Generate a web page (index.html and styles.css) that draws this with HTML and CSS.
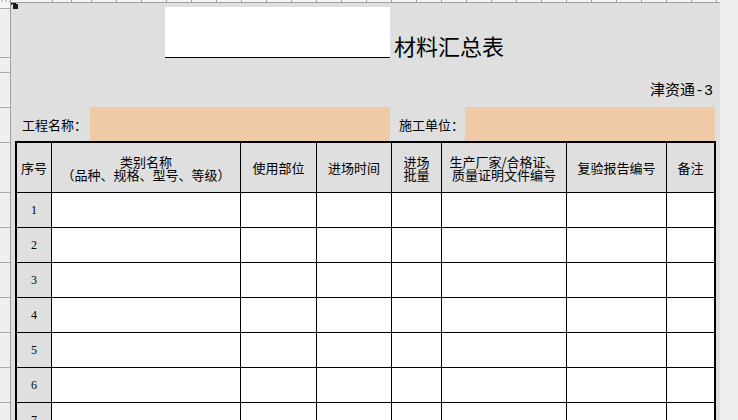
FILE: index.html
```html
<!DOCTYPE html>
<html lang="zh">
<head>
<meta charset="utf-8">
<title>材料汇总表</title>
<link rel="stylesheet" href="styles.css">
</head>
<body>
<div class="app">
  <div class="gutter">
    <div class="gr gr-0"></div>
    <div class="gr gr-49"></div>
    <div class="gr gr-15"></div>
    <div class="gr gr-35"></div>
    <div class="gr gr-35"></div>
    <div class="gr gr-50"></div>
    <div class="gr gr-35"></div>
    <div class="gr gr-35"></div>
    <div class="gr gr-35"></div>
    <div class="gr gr-35"></div>
    <div class="gr gr-35"></div>
    <div class="gr gr-35"></div>
    <div class="gr gr-35"></div>
  </div>
  <div class="main">
    <div class="ticks">
      <div class="tk tk-a"></div><div class="tk tk-b"></div><div class="tk tk-c"></div>
      <div class="tk"></div><div class="tk"></div><div class="tk"></div><div class="tk"></div><div class="tk"></div>
      <div class="tk"></div><div class="tk"></div><div class="tk"></div><div class="tk"></div><div class="tk"></div>
      <div class="tk"></div><div class="tk"></div><div class="tk"></div><div class="tk"></div><div class="tk"></div>
      <div class="tk"></div><div class="tk"></div><div class="tk"></div><div class="tk"></div><div class="tk"></div>
      <div class="tk"></div><div class="tk"></div><div class="tk"></div><div class="tk"></div><div class="tk"></div>
    </div>
    <div class="sheet">
      <div class="marker"><span class="mk-top"></span><span class="mk-left"></span><span class="mk-sq"></span></div>
      <div class="title-row">
        <div class="title-blank"></div>
        <div class="title">材料汇总表</div>
      </div>
      <div class="spacer"></div>
      <div class="code-row"><span class="code">津资通<span class="half">-3</span></span></div>
      <div class="info-row">
        <div class="label label-1">工程名称：</div>
        <div class="fill fill-1"></div>
        <div class="label label-2">施工单位：</div>
        <div class="fill fill-2"></div>
      </div>
      <div class="grid">
        <div class="h">序号</div>
        <div class="h h2">类别名称<br>（品种、规格、型号、等级）</div>
        <div class="h">使用部位</div>
        <div class="h">进场时间</div>
        <div class="h h2">进场<br>批量</div>
        <div class="h h2">生产厂家/合格证、<br>质量证明文件编号</div>
        <div class="h">复验报告编号</div>
        <div class="h">备注</div>

        <div class="n">1</div><div class="c"></div><div class="c"></div><div class="c"></div><div class="c"></div><div class="c"></div><div class="c"></div><div class="c"></div>
        <div class="n">2</div><div class="c"></div><div class="c"></div><div class="c"></div><div class="c"></div><div class="c"></div><div class="c"></div><div class="c"></div>
        <div class="n">3</div><div class="c"></div><div class="c"></div><div class="c"></div><div class="c"></div><div class="c"></div><div class="c"></div><div class="c"></div>
        <div class="n">4</div><div class="c"></div><div class="c"></div><div class="c"></div><div class="c"></div><div class="c"></div><div class="c"></div><div class="c"></div>
        <div class="n">5</div><div class="c"></div><div class="c"></div><div class="c"></div><div class="c"></div><div class="c"></div><div class="c"></div><div class="c"></div>
        <div class="n">6</div><div class="c"></div><div class="c"></div><div class="c"></div><div class="c"></div><div class="c"></div><div class="c"></div><div class="c"></div>
        <div class="n">7</div><div class="c"></div><div class="c"></div><div class="c"></div><div class="c"></div><div class="c"></div><div class="c"></div><div class="c"></div>
      </div>
    </div>
  </div>
  <div class="side"></div>
</div>
</body>
</html>
```
FILE: styles.css
```css
* { box-sizing: border-box; }
html, body {
  margin: 0;
  padding: 0;
  width: 738px;
  height: 420px;
  overflow: hidden;
  background: #efefef;
}
body {
  font-family: "Noto Sans CJK SC", "Noto Sans", sans-serif;
  color: #000;
}
.app {
  display: flex;
  width: 738px;
  height: 420px;
  overflow: hidden;
}
/* left row-header gutter */
.gutter {
  width: 11px;
  flex: none;
  border-right: 1px solid #a0a0a0;
  background: #efefef;
  display: flex;
  flex-direction: column;
}
.gr {
  flex: none;
  border-bottom: 1px solid #a8a8a8;
}
.gr-0 {
  height: 9px;
  background:
    repeating-linear-gradient(-45deg, #a8a8a8 0 1px, #f6f6f6 1px 3px) top / 100% 2px no-repeat,
    #f7f7f7;
}
.gr-49 { height: 49px; }
.gr-15 { height: 15px; }
.gr-35 { height: 35px; }
.gr-50 { height: 50px; }

.main {
  width: 709px;
  flex: none;
  display: flex;
  flex-direction: column;
  overflow: hidden;
}
.ticks {
  height: 3px;
  display: flex;
  border-bottom: 1px solid #a0a0a0;
  background: #f4f4f4;
  flex: none;
}
.tk {
  width: 25px;
  height: 2px;
  flex: none;
  border-right: 1px solid #a0a0a0;
}
.tk-a { width: 42px; }
.tk-b { width: 19px; }
.tk-c { width: 20px; }

.sheet {
  position: relative;
  flex: 1;
  background: #dfdfdf;
  padding-top: 4px;
  overflow: hidden;
}
.marker {
  position: absolute;
  left: -1px;
  top: -1px;
  width: 8px;
  height: 8px;
}
.marker span { position: absolute; background: #1a1a1a; }
.mk-top { left: 0; top: 0; width: 6px; height: 2px; }
.mk-left { left: 0; top: 0; width: 2px; height: 3px; }
.mk-sq { left: 3px; top: 2px; width: 5px; height: 5px; }

.title-row {
  display: flex;
  height: 51px;
  padding-left: 154px;
}
.title-blank {
  width: 225px;
  height: 51px;
  background: #fff;
  border-bottom: 1px solid #000;
}
.title {
  margin-left: 4px;
  margin-top: 27px;
  font-size: 22px;
  line-height: 22px;
  height: 22px;
}
.spacer { height: 14px; }
.code-row {
  height: 35px;
  display: flex;
  align-items: center;
  justify-content: flex-end;
  padding-right: 7px;
  font-size: 15px;
  line-height: 15px;
}
.code { white-space: nowrap; }
.half {
  font-family: "Liberation Mono", monospace;
  font-size: 15px;
}
.info-row {
  height: 34px;
  display: flex;
  align-items: stretch;
  font-size: 13px;
}
.label {
  display: flex;
  align-items: center;
}
.label-1 { width: 79px; padding-left: 11px; }
.label-2 { width: 75px; padding-left: 9px; }
.fill { background: #f0caa7; }
.fill-1 { width: 300px; }
.fill-2 { width: 250px; }

.grid {
  margin-left: 4px;
  width: 701px;
  display: grid;
  grid-template-columns: 34px 188px 75px 74px 49px 124px 99px 47px;
  grid-template-rows: 49px repeat(7, 34px);
  gap: 1px;
  background: #000;
  border: 2px solid #000;
}
.h {
  background: #dfdfdf;
  display: flex;
  align-items: center;
  justify-content: center;
  text-align: center;
  font-size: 13px;
  line-height: 13px;
  white-space: nowrap;
}
.h2 { font-size: 13px; line-height: 13px; }
.n {
  background: #dfdfdf;
  display: flex;
  align-items: center;
  justify-content: center;
  font-family: "Liberation Serif", serif;
  font-size: 12px;
  line-height: 12px;
}
.c { background: #fff; }
.side {
  flex: 1;
  background: #efefef;
}
```
